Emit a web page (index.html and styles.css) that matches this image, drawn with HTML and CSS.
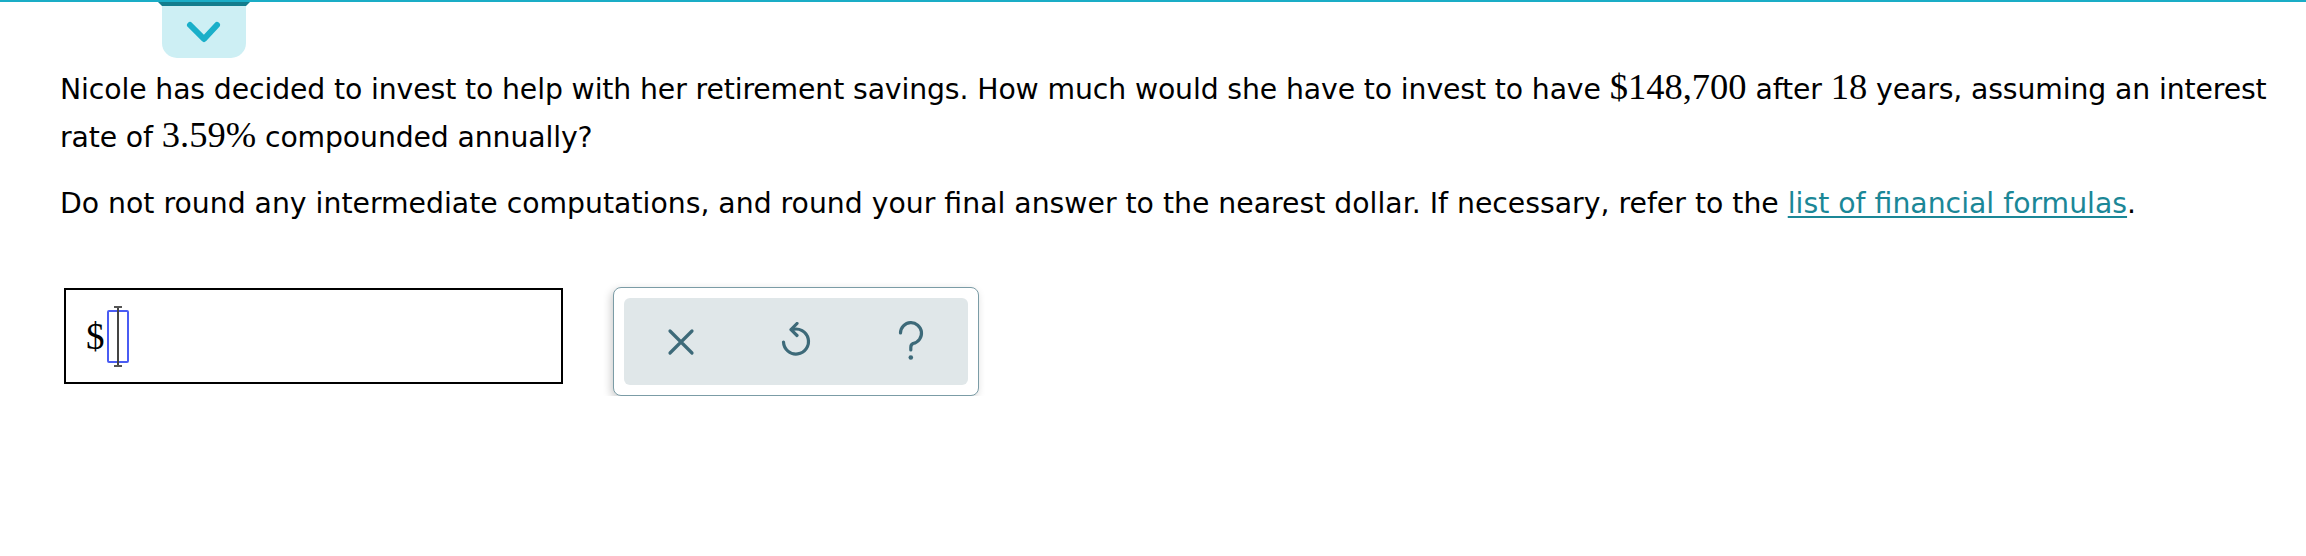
FILE: index.html
```html
<!DOCTYPE html>
<html lang="en">
<head>
<meta charset="utf-8">
<title>Question</title>
<link rel="stylesheet" href="styles.css">
</head>
<body>
<header class="topbar">
  <div class="tab">
    <div class="tab-lip"></div>
    <div class="tab-body">
      <svg class="chevron" width="84" height="52" viewBox="0 0 84 52"><path d="M28 19 L42 33 L55 19" fill="none" stroke="#1aafc9" stroke-width="6" stroke-linecap="round" stroke-linejoin="round"/></svg>
    </div>
  </div>
</header>
<main class="question">
  <p class="para"><span>Nicole has decided to invest to help with her retirement savings. How much would she have to invest to have</span> <span class="math">$148,700</span> <span>after</span> <span class="math">18</span> <span>years, assuming an interest</span> <span>rate of</span> <span class="math">3.59%</span> <span>compounded annually?</span></p>
  <p class="para">Do not round any intermediate computations, and round your final answer to the nearest dollar. If necessary, refer to the <a class="link" href="#">list of financial formulas</a>.</p>
  <div class="answer-row">
    <div class="answer-box">
      <span class="dollar">$</span>
      <span class="slot"><span class="caret"></span></span>
    </div>
    <div class="tools">
      <div class="tools-inner">
        <button class="tool" type="button" aria-label="Clear">
          <svg width="30" height="30" viewBox="-15 -15 30 30"><path d="M-11 -11 L11 11 M11 -11 L-11 11" fill="none" stroke="#3d6a79" stroke-width="3.2" stroke-linecap="round"/></svg>
        </button>
        <button class="tool" type="button" aria-label="Undo">
          <svg width="34" height="40" viewBox="-17 -20 34 40"><path d="M-4 -12.3 A12.5 12.5 0 1 1 -12.5 0" fill="none" stroke="#3d6a79" stroke-width="3.2" stroke-linecap="round"/><path d="M1 -18.5 L-5 -12.3 L1 -6.5" fill="none" stroke="#3d6a79" stroke-width="3.2" stroke-linecap="round" stroke-linejoin="round"/></svg>
        </button>
        <button class="tool" type="button" aria-label="Help">
          <svg width="30" height="44" viewBox="-15 -22 30 44"><path d="M-10.5 -9 A10.5 10.5 0 1 1 2 1.5 C0.5 2.2 -0.2 3.5 -0.2 5.5 L-0.2 8" fill="none" stroke="#3d6a79" stroke-width="3.2" stroke-linecap="round"/><circle cx="-0.2" cy="15.5" r="2.3" fill="#3d6a79"/></svg>
        </button>
      </div>
    </div>
  </div>
</main>
</body>
</html>
```
FILE: styles.css
```css
html, body {
  margin: 0;
  padding: 0;
  background: #ffffff;
}
body {
  font-family: "DejaVu Sans", Verdana, sans-serif;
  color: #000;
}
.topbar {
  border-top: 2px solid #1aadc6;
  height: 56px;
}
.tab {
  width: 92px;
  margin-left: 158px;
}
.tab-lip {
  height: 4px;
  background: #137d8d;
  clip-path: polygon(0 0, 100% 0, calc(100% - 4px) 100%, 4px 100%);
}
.tab-body {
  margin: 0 4px;
  height: 52px;
  background: #cdeff4;
  border-radius: 0 0 15px 15px;
}
.chevron {
  display: block;
}
.question {
  padding-left: 60px;
  width: 2234px;
}
.para {
  margin: 0 0 18px 0;
  font-size: 28.3px;
  line-height: 48px;
}
.para:first-child {
  margin-top: 8px;
  letter-spacing: -0.12px;
}
.math {
  font-family: "Liberation Serif", "Times New Roman", serif;
  font-size: 36.5px;
  line-height: 1;
  letter-spacing: 0;
}
.link {
  color: #1b8797;
  text-decoration: underline;
  text-underline-offset: 3px;
}
.answer-row {
  display: flex;
  align-items: flex-start;
  margin-top: 60px;
}
.answer-box {
  margin-left: 4px;
  width: 475px;
  height: 92px;
  border: 2px solid #000;
  display: flex;
  align-items: center;
  padding-left: 20px;
  box-sizing: content-box;
}
.dollar {
  font-family: "Liberation Serif", "Times New Roman", serif;
  font-size: 37px;
  line-height: 1;
  margin-right: 2px;
}
.slot {
  position: relative;
  width: 18px;
  height: 49px;
  border: 2px solid #4a5cf3;
  border-radius: 2px;
}
.caret {
  position: absolute;
  left: 8px;
  top: -6px;
  width: 2px;
  height: 61px;
  background: #444;
}
.caret::before, .caret::after {
  content: "";
  position: absolute;
  left: -3px;
  width: 8px;
  height: 2px;
  background: #555;
}
.caret::before { top: 0; }
.caret::after { bottom: 0; }
.tools {
  margin-left: 50px;
  margin-top: -1px;
  border: 1.5px solid #7b9ca6;
  border-radius: 8px;
  padding: 10px;
  background: #fff;
  box-shadow: -2px 3px 8px rgba(0, 0, 0, 0.2);
}
.tools-inner {
  display: flex;
  width: 344px;
  height: 87px;
  background: #e0e7e9;
  border-radius: 6px;
}
.tool {
  flex: 1;
  border: 0;
  background: transparent;
  padding: 0;
  display: flex;
  align-items: center;
  justify-content: center;
  cursor: pointer;
}
.tool svg { display: block; }
```
